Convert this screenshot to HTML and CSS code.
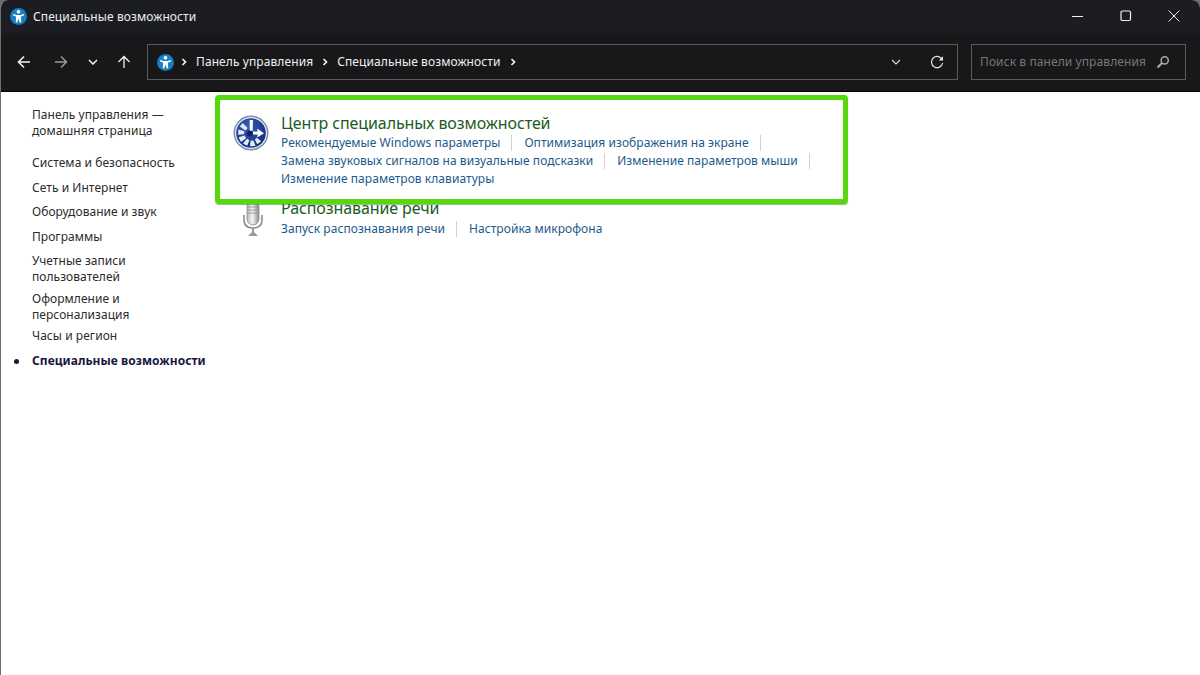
FILE: index.html
```html
<!DOCTYPE html>
<html>
<head>
    <title>Специальные возможности</title>
    <link rel="stylesheet" href="styles.css">
</head>
<body>
    <svg class="defs" width="0" height="0">
        <symbol id="access" viewBox="0 0 16 16">
            <circle cx="8" cy="8" r="8" fill="#1478b8"/>
            <circle cx="8" cy="8" r="7.2" fill="#1a7fc4"/>
            <circle cx="8" cy="3.6" r="1.7" fill="#fff"/>
            <path d="M3 5.6 L6.2 6.6 H9.8 L13 5.6 L13.3 6.9 L10.2 8.2 L10.6 13.4 L9.2 13.6 L8 10 L6.8 13.6 L5.4 13.4 L5.8 8.2 L2.7 6.9 Z" fill="#fff"/>
        </symbol>
    </svg>

    <div class="window">
        <header class="titlebar">
            <svg class="title-icon"><use href="#access"/></svg>
            <span class="title-text">Специальные возможности</span>
            <div class="win-buttons">
                <svg class="win-btn" viewBox="0 0 12 12"><path d="M0 6.5 H11" stroke="#eee" fill="none"/></svg>
                <svg class="win-btn" viewBox="0 0 12 12"><rect x="1" y="1" width="9.5" height="9.5" rx="1.2" stroke="#eee" fill="none" stroke-width="1.2"/></svg>
                <svg class="win-btn" viewBox="0 0 12 12"><path d="M0.5 0.5 L11.5 11.5 M11.5 0.5 L0.5 11.5" stroke="#eee" fill="none"/></svg>
            </div>
        </header>

        <div class="toolbar">
            <div class="nav-buttons">
                <svg class="nav-back" viewBox="0 0 14 14"><path d="M13 7 H1.5 M7 1.5 L1.5 7 L7 12.5" stroke="#f2f2f2" stroke-width="1.6" fill="none"/></svg>
                <svg class="nav-forward" viewBox="0 0 14 14"><path d="M1 7 H12.5 M7 1.5 L12.5 7 L7 12.5" stroke="#9a9a9a" stroke-width="1.5" fill="none"/></svg>
                <svg class="nav-down" viewBox="0 0 10 6"><path d="M1 1 L5 5 L9 1" stroke="#f2f2f2" stroke-width="1.5" fill="none"/></svg>
                <svg class="nav-up" viewBox="0 0 14 14"><path d="M7 13 V1.5 M1.5 7 L7 1.5 L12.5 7" stroke="#f2f2f2" stroke-width="1.3" fill="none"/></svg>
            </div>
            <div class="address">
                <svg class="address-icon"><use href="#access"/></svg>
                <svg class="crumb-arrow" viewBox="0 0 6 8"><path d="M1.5 1 L4.5 4 L1.5 7" stroke="#f2f2f2" stroke-width="1.7" fill="none"/></svg>
                <span class="crumb">Панель управления</span>
                <svg class="crumb-arrow" viewBox="0 0 6 8"><path d="M1.5 1 L4.5 4 L1.5 7" stroke="#f2f2f2" stroke-width="1.7" fill="none"/></svg>
                <span class="crumb">Специальные возможности</span>
                <svg class="crumb-arrow" viewBox="0 0 6 8"><path d="M1.5 1 L4.5 4 L1.5 7" stroke="#f2f2f2" stroke-width="1.7" fill="none"/></svg>
                <svg class="address-down" viewBox="0 0 10 6"><path d="M1 1 L5 5 L9 1" stroke="#e0e0e0" stroke-width="1.1" fill="none"/></svg>
                <svg class="refresh" viewBox="0 0 14 14"><path d="M12.3 5 A5.6 5.6 0 1 0 12.6 8" stroke="#e8e8e8" stroke-width="1.2" fill="none"/><path d="M13 1.2 V5.4 H8.8 Z" fill="#e8e8e8"/></svg>
            </div>
            <div class="search">
                <span class="search-text">Поиск в панели управления</span>
                <svg class="search-icon" viewBox="0 0 14 14"><circle cx="8.7" cy="5.3" r="3.6" stroke="#a8a8a8" stroke-width="1.5" fill="none"/><path d="M6 8 L1.5 12.5" stroke="#a8a8a8" stroke-width="2.2"/></svg>
            </div>
        </div>

        <div class="content">
            <nav class="sidebar">
                <a class="side-item side-home">Панель управления — домашняя страница</a>
                <a class="side-item">Система и безопасность</a>
                <a class="side-item">Сеть и Интернет</a>
                <a class="side-item">Оборудование и звук</a>
                <a class="side-item">Программы</a>
                <a class="side-item side-double">Учетные записи пользователей</a>
                <a class="side-item side-double">Оформление и персонализация</a>
                <a class="side-item">Часы и регион</a>
                <a class="side-item side-current">Специальные возможности</a>
            </nav>

            <main class="main">
                <section class="group group-first">
                    <svg class="group-icon" viewBox="0 0 36 36">
                        <defs>
                            <radialGradient id="ring" cx="40%" cy="30%" r="75%">
                                <stop offset="0" stop-color="#3560b8"/>
                                <stop offset="1" stop-color="#122a78"/>
                            </radialGradient>
                        </defs>
                        <circle cx="18" cy="18" r="17.5" fill="#7f8fb0"/>
                        <circle cx="18" cy="18" r="16" fill="#e8edf5"/>
                        <circle cx="18" cy="18" r="14.8" fill="url(#ring)"/>
                        <path d="M16.6 5 H20 L19.6 16 H16.8 Z" fill="#fff"/>
                        <path d="M20 16.4 H24.6 L24.2 13.6 L31 18.2 L24.2 22.4 L24.6 19.6 H20 Z" fill="#fff"/>
                        <path d="M9.6 8 L14.6 13 L12.4 15.4 L6.8 11.4 Z M5.4 14.4 L11.4 16.2 L11 19.2 L5 19.8 Z M5.6 22.2 L11.6 20.6 L13 23.2 L8 27 Z M10 28.4 L14 23.8 L16.4 25.2 L14.2 30.8 Z M17 31.4 L17.6 25.8 L20.4 25.4 L22.6 30.8 Z M24.2 29.2 L21.8 24.4 L23.8 22.8 L28.2 26.2 Z" fill="#e4ebf8"/>
                        <circle cx="16.8" cy="18.6" r="3" fill="#0e2260"/>
                    </svg>
                    <div class="group-body">
                        <h2 class="group-title">Центр специальных возможностей</h2>
                        <div class="links">
                            <a class="link">Рекомендуемые Windows параметры</a>
                            <a class="link">Оптимизация изображения на экране</a>
                            <a class="link">Замена звуковых сигналов на визуальные подсказки</a>
                            <a class="link">Изменение параметров мыши</a>
                            <a class="link link-last">Изменение параметров клавиатуры</a>
                        </div>
                    </div>
                </section>
                <section class="group group-speech">
                    <svg class="group-icon mic-icon" viewBox="0 0 24 36">
                        <defs>
                            <linearGradient id="mic" x1="0" x2="1" y1="0" y2="0">
                                <stop offset="0" stop-color="#b8b8b8"/>
                                <stop offset="0.45" stop-color="#f4f4f4"/>
                                <stop offset="1" stop-color="#8e8e8e"/>
                            </linearGradient>
                        </defs>
                        <path d="M3 14 V19 C3 25 7 27 12 27 C17 27 21 25 21 19 V14" stroke="#8c8c8c" stroke-width="1.6" fill="none"/>
                        <rect x="6" y="0" width="12" height="24" rx="6" fill="url(#mic)" stroke="#8a8a8a" stroke-width="0.8"/>
                        <path d="M6.5 6 H17.5 M6.5 9 H17.5 M6.5 12 H17.5" stroke="#8a8a8a" stroke-width="0.8"/>
                        <path d="M11 27 H13 V31 L17 35 H7 L11 31 Z" fill="#9a9a9a"/>
                    </svg>
                    <div class="group-body">
                        <h2 class="group-title">Распознавание речи</h2>
                        <div class="links">
                            <a class="link">Запуск распознавания речи</a>
                            <a class="link link-last">Настройка микрофона</a>
                        </div>
                    </div>
                </section>
                <div class="highlight"></div>
            </main>
        </div>
    </div>
</body>
</html>
```

FILE: styles.css
```css
html, body {
    margin: 0;
    padding: 0;
    height: 100%;
    background: #6d6d6d;
}

body {
    font-family: "Noto Sans", "Open Sans", sans-serif;
    font-size: 12px;
    letter-spacing: 0.09px;
    overflow: hidden;
}

.defs {
    position: absolute;
}

.window {
    height: 675px;
    display: flex;
    flex-direction: column;
    border-left: 1px solid #6f6f6f;
    box-sizing: border-box;
    border-radius: 8px 8px 0 0;
    overflow: hidden;
    background: #fff;
}

.titlebar {
    height: 33px;
    flex: none;
    display: flex;
    align-items: center;
    background: #1c1d22;
    color: #eee;
    padding-left: 9px;
}

.title-icon {
    width: 17px;
    height: 17px;
}

.title-text {
    margin-left: 6px;
    font-size: 12px;
}

.win-buttons {
    margin-left: auto;
    display: flex;
    align-items: center;
    gap: 36px;
    padding: 0 20px 1px 0;
}

.win-btn {
    width: 12px;
    height: 12px;
}

.toolbar {
    height: 59px;
    flex: none;
    box-sizing: border-box;
    display: flex;
    align-items: flex-start;
    padding-top: 11px;
    background: #18181a;
    border-bottom: 1px solid #000;
}

.nav-buttons {
    width: 146px;
    height: 36px;
    display: flex;
    align-items: center;
    padding-left: 16px;
    box-sizing: border-box;
}

.nav-back, .nav-forward, .nav-up {
    width: 14px;
    height: 14px;
}

.nav-forward {
    margin-left: 23px;
}

.nav-down {
    width: 10px;
    height: 6px;
    margin-left: 20px;
}

.nav-up {
    margin-left: 19px;
}

.address {
    width: 811px;
    height: 36px;
    box-sizing: border-box;
    border: 1px solid #5a5a5a;
    display: flex;
    align-items: center;
    padding-left: 9px;
    color: #f0f0f0;
}

.address-icon {
    width: 17px;
    height: 17px;
    margin-right: 7px;
}

.crumb-arrow {
    width: 6px;
    height: 8px;
}

.crumb {
    margin: 0 9px 2px;
}

.address-down {
    width: 10px;
    height: 6px;
    margin-left: auto;
}

.refresh {
    width: 14px;
    height: 14px;
    margin-left: 29px;
    margin-right: 13px;
}

.search {
    width: 215px;
    height: 36px;
    margin-left: 13px;
    box-sizing: border-box;
    border: 1px solid #5a5a5a;
    display: flex;
    align-items: center;
    justify-content: space-between;
    padding: 0 15px 0 8px;
    color: #777;
}

.search-text {
    margin-bottom: 2px;
}

.search-icon {
    width: 14px;
    height: 14px;
}

.content {
    flex: 1;
    display: flex;
    background: #fff;
}

.sidebar {
    width: 214px;
    flex: none;
    box-sizing: border-box;
    padding: 15px 8px 0 31px;
    display: flex;
    flex-direction: column;
    letter-spacing: 0.05px;
}

.side-item {
    line-height: 16px;
    margin-bottom: 8.5px;
    color: #2b2b2b;
}

.side-home {
    margin-bottom: 16px;
}

.side-double {
    margin-bottom: 5.5px;
    width: 120px;
}

.side-current {
    position: relative;
    font-weight: 700;
    color: #17173f;
    white-space: nowrap;
}

.side-current::before {
    content: "";
    position: absolute;
    left: -18px;
    top: 6px;
    width: 5px;
    height: 5px;
    border-radius: 50%;
    background: #17173f;
}

.main {
    position: relative;
    flex: 1;
    padding: 21px 0 0 18px;
}

.group {
    display: flex;
}

.group-first {
    margin-bottom: 11px;
}

.group-icon {
    width: 36px;
    height: 36px;
    flex: none;
    margin: 2px 12px 0 0;
}

.mic-icon {
    width: 24px;
    height: 36px;
    margin: 3px 16px 0 8px;
}

.group-title {
    margin: 0;
    font-size: 16px;
    font-weight: 400;
    letter-spacing: -0.1px;
    line-height: 21px;
    color: #1a5c24;
}

.links {
    width: 560px;
    display: flex;
    flex-wrap: wrap;
    row-gap: 2px;
    margin-top: 1px;
    letter-spacing: 0.05px;
}

.group-speech .links {
    margin-top: 2px;
}

.link {
    line-height: 16px;
    color: #1c5a8c;
    padding-right: 11px;
    margin-right: 12px;
    border-right: 1px solid #d0d0d0;
}

.link-last {
    border-right: none;
}

/* green marker drawn over the page */
.highlight {
    position: absolute;
    left: 0;
    top: 3px;
    width: 633px;
    height: 109px;
    box-sizing: border-box;
    border: 5px solid #55d80e;
    border-radius: 4px;
    box-shadow: 0 1px 1px rgba(40, 110, 10, 0.5);
}
```
